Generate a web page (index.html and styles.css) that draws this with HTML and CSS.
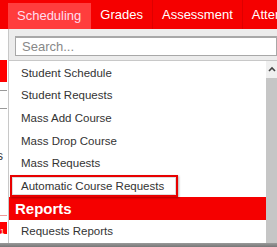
FILE: index.html
```html
<!DOCTYPE html>
<html lang="en">
<head>
  <meta charset="utf-8">
  <title>Scheduling Menu</title>
  <link rel="stylesheet" href="styles.css">
</head>
<body>
  <!-- Top navigation tabs -->
  <div class="topbar">
    <div class="tab active">Scheduling</div>
    <div class="tab">Grades</div>
    <div class="tab">Assessment</div>
    <div class="tab">Attendance</div>
  </div>

  <div class="page">
    <!-- Sliver of the page behind the menu -->
    <div class="left-strip">
      <div class="strip-red"></div>
      <div class="strip-line first"></div>
      <div class="strip-line"></div>
      <div class="strip-char">s</div>
      <div class="strip-line low"></div>
      <div class="strip-red small">1</div>
    </div>

    <!-- Dropdown menu -->
    <div class="dropdown">
      <div class="search-area">
        <input type="text" class="search-input" placeholder="Search...">
      </div>
      <div class="list-row">
        <div class="menu-list">
          <div class="menu-item">Student Schedule</div>
          <div class="menu-item">Student Requests</div>
          <div class="menu-item">Mass Add Course</div>
          <div class="menu-item">Mass Drop Course</div>
          <div class="menu-item">Mass Requests</div>
          <div class="menu-item boxed"><span class="highlight">Automatic Course Requests</span></div>
          <div class="menu-heading">Reports</div>
          <div class="menu-item">Requests Reports</div>
        </div>
        <div class="scrollbar">
          <div class="scroll-up">
            <svg width="8" height="6" viewBox="0 0 8 6"><path d="M1 5 L4 2 L7 5" fill="none" stroke="#444" stroke-width="1.6"/></svg>
          </div>
          <div class="scroll-thumb"></div>
        </div>
      </div>
    </div>
  </div>
  <div class="bottom-shadow"></div>
</body>
</html>
```

FILE: styles.css
```css
body {
  margin: 0;
  width: 277px;
  height: 247px;
  overflow: hidden;
  font-family: "Liberation Sans", Arial, sans-serif;
  background-color: #fff;
}

.topbar {
  display: flex;
  height: 29px;
  padding-left: 8px;
  background-color: #f50000;
  white-space: nowrap;
  overflow: hidden;
}

.tab {
  color: #fff;
  font-size: 13px;
  line-height: 29px;
  padding: 0 9px;
  border-right: 1px solid #de0000;
}

.tab.active {
  margin-top: 3px;
  line-height: 26px;
  padding: 0 10px 0 9px;
  background-color: #ff3d3d;
  border-right: none;
  color: #fde;
}

.page {
  display: flex;
  height: 214px;
}

.left-strip {
  width: 8px;
  flex-shrink: 0;
  display: flex;
  flex-direction: column;
}

.strip-red {
  margin-top: 31px;
  width: 7px;
  height: 22px;
  background-color: #f00;
}

.strip-red.small {
  margin-top: 6px;
  height: 12px;
  color: #fff;
  font-size: 8px;
  line-height: 20px;
  overflow: hidden;
}

.strip-line {
  margin-top: 17px;
  width: 7px;
  height: 1px;
  background-color: #999;
}

.strip-line.first {
  margin-top: 8px;
}

.strip-line.low {
  margin-top: 52px;
  background-color: #e99;
}

.strip-char {
  margin-top: 40px;
  margin-left: -3px;
  font-size: 12px;
  line-height: 14px;
  color: #333;
}

.dropdown {
  flex: 1;
  border-left: 1px solid #c8c8c8;
  display: flex;
  flex-direction: column;
  min-width: 0;
}

.search-area {
  height: 33px;
  box-sizing: border-box;
  padding: 7px 0 0 6px;
  background-color: #ececec;
  border-bottom: 1px solid #c8c8c8;
}

.search-input {
  width: 100%;
  height: 20px;
  box-sizing: border-box;
  margin: 0;
  padding: 0 6px;
  border: 1px solid #a8a8a8;
  border-top-width: 2px;
  font-family: "Liberation Sans", Arial, sans-serif;
  font-size: 13px;
  color: #333;
  background-color: #fff;
}

.search-input::placeholder {
  color: #888;
}

.list-row {
  flex: 1;
  display: flex;
  min-width: 0;
}

.menu-list {
  flex: 1;
  min-width: 0;
  overflow: hidden;
  padding-top: 1px;
}

.menu-item {
  height: 22.6px;
  line-height: 22.6px;
  padding-left: 12px;
  font-size: 11.5px;
  color: #333;
  white-space: nowrap;
}

.menu-item.boxed {
  padding-left: 1px;
}

.highlight {
  display: inline-block;
  box-sizing: border-box;
  height: 22.6px;
  line-height: 18.6px;
  width: 168px;
  padding-left: 9px;
  border: 2px solid #e80000;
  box-shadow: inset 0 0 0 1px #ddd, 1px 1px 2px rgba(0, 0, 0, 0.3);
}

.menu-heading {
  height: 23px;
  line-height: 23px;
  padding-left: 6px;
  background-color: #f50000;
  color: #fff;
  font-size: 15px;
  font-weight: bold;
}

.scrollbar {
  width: 11px;
  flex-shrink: 0;
  display: flex;
  flex-direction: column;
  background-color: #f0f0f0;
}

.scroll-up {
  height: 17px;
  display: flex;
  justify-content: center;
  align-items: center;
}

.scroll-thumb {
  flex: 1;
  background-color: #c6c6c6;
}

.bottom-shadow {
  height: 4px;
  background: linear-gradient(#9a9a9a, #777);
}
```
